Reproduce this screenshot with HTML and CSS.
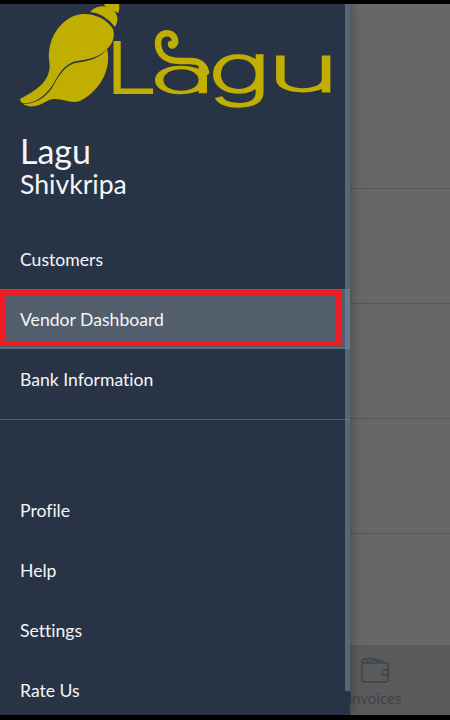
FILE: index.html
```html
<!DOCTYPE html>
<html lang="en">
<head>
<meta charset="utf-8">
<title>Lagu</title>
<link rel="stylesheet" href="styles.css">
</head>
<body>
<div class="phone">
  <aside class="drawer">
    <header class="profile">
      <svg class="logo" width="345" height="116" viewBox="0 4 345 116" aria-label="Lagu">
        <path d="M90 12C98 4 109 5 115 12Q120 19 115 27Q104 13 90 12Z"/>
        <path d="M49 60C47 35 65 14 84 14C98 14 108 21 113 29C116 39 111 47 101 54C91 60 80 60 73 62C57 69 57 84 44 95C36 102 28 104 22 103Q20 101 20 99C37 90 53 80 49 60Z"/>
        <path d="M107 49C112 69 100 91 80 101C69 105 59 95 47 101C38 107 29 108 23 104C36 104 46 97 52 88C59 75 65 66 75 63C89 61 99 59 107 49Z"/>
        <path d="M119 4Q120 10 118 13L105 6L104 4Z"/>
        <g class="wordmark">
          <text transform="translate(106 92) scale(1.35 1.02)">L</text>
          <text transform="translate(151 92) scale(1.66 .68)">a</text>
          <text transform="translate(209 92) scale(1.62 .98)">g</text>
          <text transform="translate(267 91) scale(1.88 .93)">u</text>
        </g>
        <path class="curl" d="M171 44C171 47 176 45 175 40C173 30 158 31 158 43C158 55 167 61 180 61H190C199 61 204 64 206 72"/>
      </svg>
      <h1 class="name">Lagu</h1>
      <p class="subname">Shivkripa</p>
    </header>
    <nav class="menu">
      <a class="item">Customers</a>
      <a class="item selected">Vendor Dashboard<span class="outline"></span></a>
      <a class="item">Bank Information</a>
    </nav>
    <nav class="menu secondary">
      <a class="item">Profile</a>
      <a class="item">Help</a>
      <a class="item">Settings</a>
      <a class="item">Rate Us</a>
    </nav>
    <span class="scrollbar"></span>
  </aside>
  <main class="page">
    <div class="row first"></div>
    <div class="row"></div>
    <div class="row"></div>
    <div class="row"></div>
    <div class="rest"></div>
    <footer class="tab">
      <svg class="wallet" width="30" height="28" viewBox="0 0 30 28">
        <path d="M5 2Q2 2 2 5V22Q2 25 5 25H25Q28 25 28 22V9Q28 6 25 6H5Q2 6 2 4.5Q2 2 5 2H8M6 6L9 1L23 4V6M9 5L12 2.5L20 5.5"/>
        <rect x="22" y="13" width="7" height="5" rx="1"/>
      </svg>
      <span class="label">Invoices</span>
    </footer>
  </main>
</div>
</body>
</html>
```
FILE: styles.css
```css
* { box-sizing: border-box; }
body { margin: 0; background: #000; font-family: Lato, sans-serif; font-variant-ligatures: none; }
.phone {
  display: flex;
  width: 450px;
  height: 720px;
  padding: 4px 0 5px;
  background: #000;
  overflow: hidden;
}
.drawer {
  position: relative;
  z-index: 1;
  flex: 0 0 350px;
  height: 711px;
  background: #283445;
  color: #f5f6f7;
  box-shadow: 0 0 12px rgba(0, 0, 0, .35);
  clip-path: inset(0 -20px 0 0);
}
.profile { height: 225px; }
.logo { display: block; fill: #c0ae00; }
.wordmark {
  font: 100 66px Inter, sans-serif;
  font-feature-settings: "cv11";
  stroke: #c0ae00;
  stroke-width: 4.5;
}
.wordmark text { vector-effect: non-scaling-stroke; }
.curl { fill: none; stroke: #c0ae00; stroke-width: 6.5; stroke-linecap: round; }
.name { margin: 11px 0 0 20px; font-size: 34px; line-height: 40px; font-weight: 400; }
.subname { margin: -3px 0 0 20px; font-size: 26.6px; line-height: 32px; }
.menu { display: flex; flex-direction: column; }
.item { position: relative; height: 60px; padding-left: 20px; font-size: 17.6px; line-height: 61px; }
.selected { background: #525e6b; border-top: 1px solid #566977; border-bottom: 2px solid #566977; line-height: 59px; }
.outline { position: absolute; left: 0; top: 0; width: 341px; height: 56px; border: 5px solid #ef1c24; }
.secondary { margin-top: 10px; border-top: 1px solid #526274; padding-top: 60px; }
.scrollbar { position: absolute; right: 0; top: 0; width: 5px; height: 687px; background: rgba(116, 139, 162, .6); }
.page { display: flex; flex: 1; flex-direction: column; height: 711px; background: #676767; }
.row { height: 115px; border-bottom: 1px solid #555; }
.first { height: 185px; }
.rest { flex: 1; }
.tab { display: flex; flex-direction: column; height: 70px; background: #5b5b5b; color: #3c4450; }
.wallet { margin: 12px 0 0 10px; fill: none; stroke: #3c4450; stroke-width: 1.3; }
.label { margin: 4px 0 0 -2px; font-size: 15px; line-height: 18px; }
```
